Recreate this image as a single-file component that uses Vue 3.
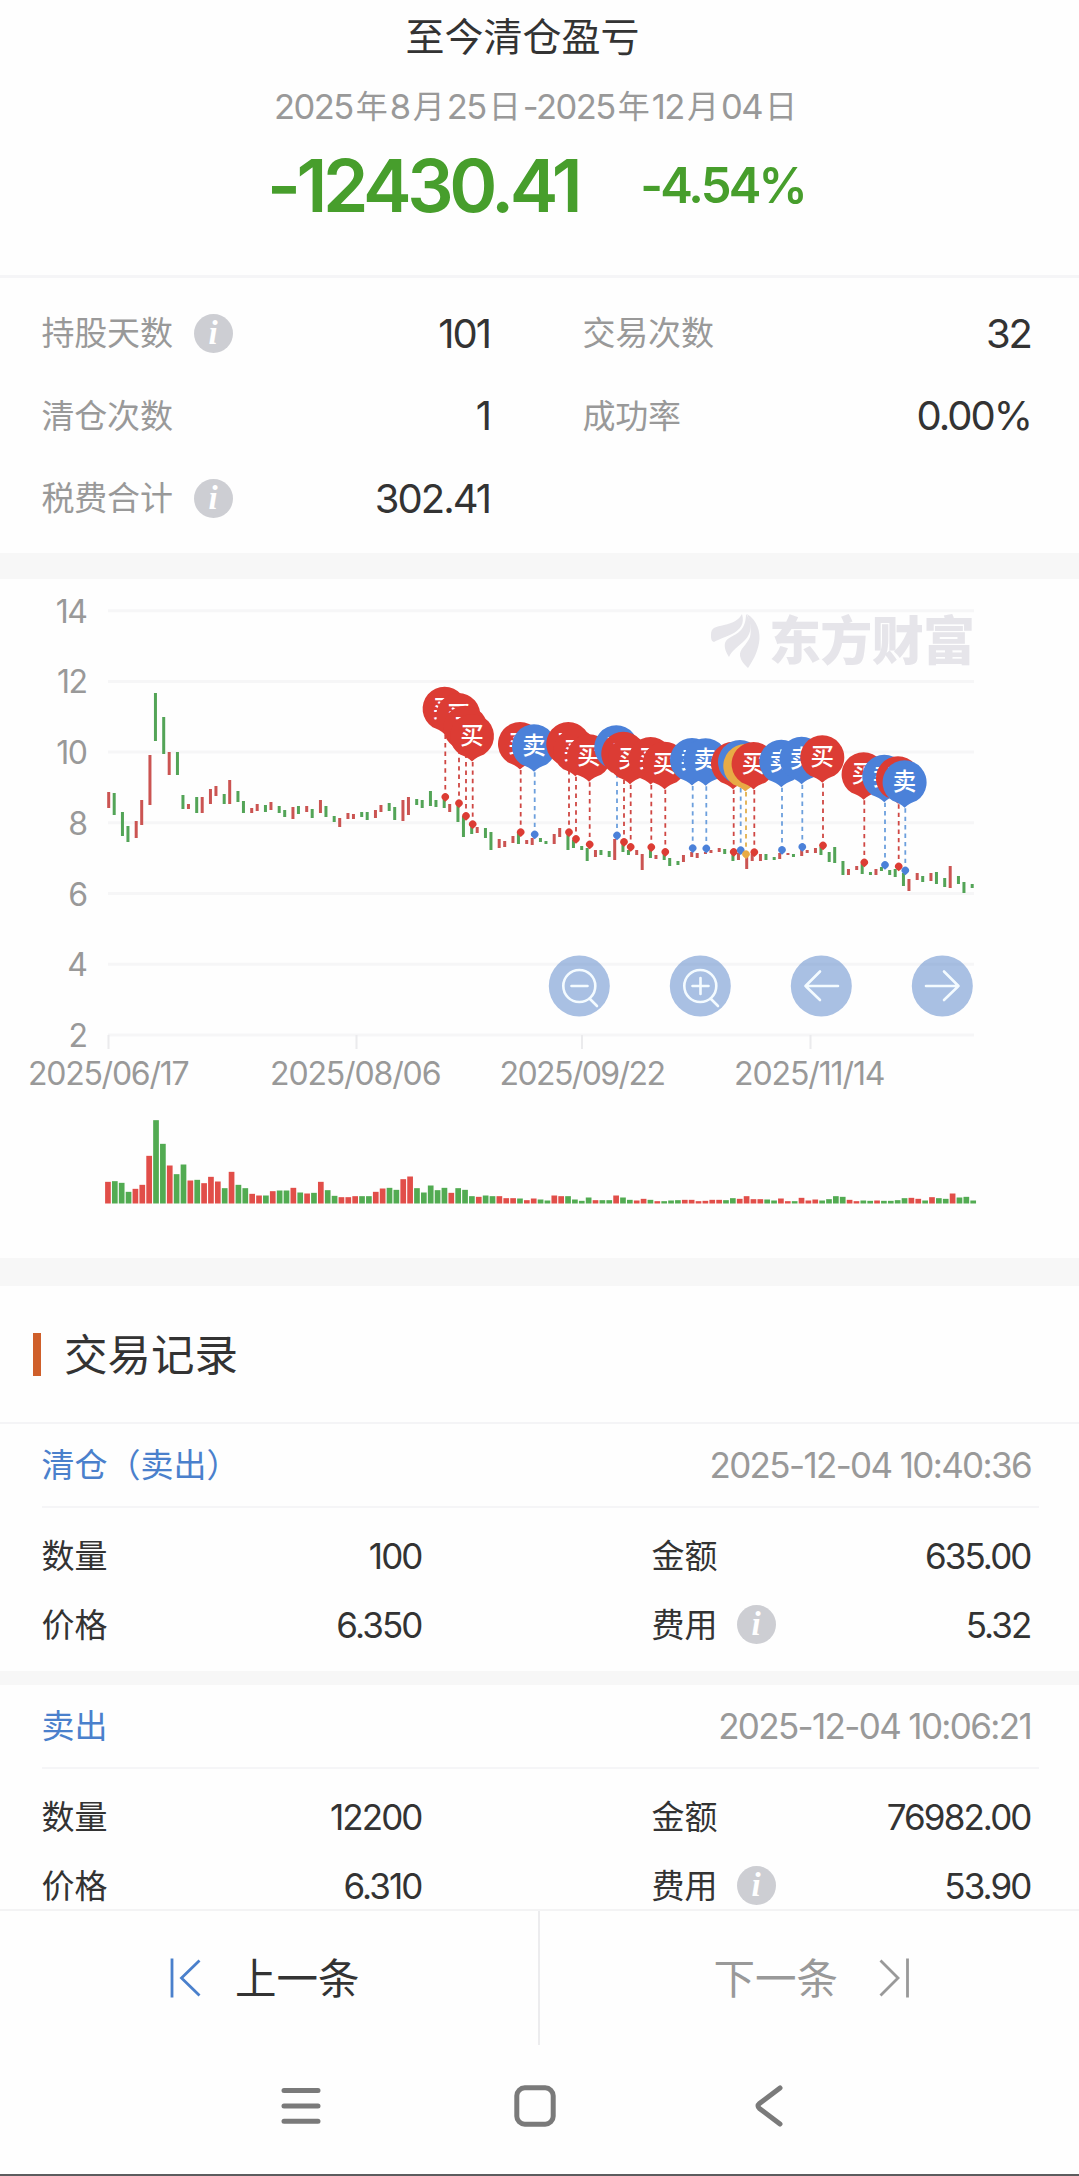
<template>
  <div class="page">
    <!-- 顶部盈亏 -->
    <header class="summary">
      <h1 class="summary-title">至今清仓盈亏</h1>
      <p class="summary-date">
        <span v-for="(part, i) in dateParts" :key="i" :class="{ unit: isUnit(part) }">{{ part }}</span>
      </p>
      <div class="summary-profit">
        <span class="profit">-12430.41</span>
        <span class="percent">-4.54%</span>
      </div>
    </header>

    <!-- 统计 -->
    <section class="stats">
      <div v-for="item in stats" :key="item.label" class="stat">
        <span class="label">{{ item.label }}</span>
        <svg v-if="item.info" class="info" viewBox="0 0 39 39">
          <circle cx="19.5" cy="19.5" r="19.5" />
          <text x="19" y="30">i</text>
        </svg>
        <span class="stat-value">{{ item.value }}</span>
      </div>
    </section>

    <!-- K线图 -->
    <section class="chart">
      <svg class="chart-svg" viewBox="0 579 1079 679">
        <g class="grid">
          <line v-for="g in grid" :key="g.label" x1="108" x2="974" :y1="g.y" :y2="g.y" />
          <line v-for="t in ticks" :key="t.label" class="tick" :x1="t.x" :x2="t.x" y1="1035" y2="1049" />
        </g>
        <g class="axis">
          <text v-for="g in grid" :key="g.label" x="86.5" :y="g.y + 12" text-anchor="end">{{ g.label }}</text>
          <text
            v-for="t in ticks"
            :key="t.label"
            :x="t.left"
            y="1085"
            :textLength="t.width"
          >{{ t.label }}</text>
        </g>

        <!-- 水印 -->
        <g class="watermark">
          <path d="M711 635C711 627 716 627 724 625C733 623 739 620 742 614C745 624 740 630 732 634C723 638 717 640 714 642C711 641 711 638 711 635Z" />
          <path d="M725 643C727 637 735 636 740 631C744 627 746 621 746 614C753 622 752 633 745 640C739 646 732 650 729 657C726 652 724 648 725 643Z" />
          <path d="M740 656C739 649 747 645 750 637C752 629 750 621 747 614C757 620 761 632 759 643C757 654 752 662 748 668C744 664 741 661 740 656Z" />
          <text x="769" y="660" textLength="206">东方财富</text>
        </g>

        <rect
          v-for="c in candles"
          :key="c.i"
          :class="c.color"
          :x="c.x - 1.5"
          :y="c.top"
          width="3"
          :height="c.height"
        />

        <g v-for="(m, i) in markers" :key="'line' + i" :class="m.type">
          <line class="dash" :x1="m.x" :x2="m.x" :y1="m.y - 62" :y2="m.y - 4" />
          <path class="dot" :d="`M${m.x} ${m.y + 5}l-2.6-2.2a3.7 3.7 0 1 1 5.2 0Z`" />
        </g>
        <g
          v-for="(m, i) in markers"
          :key="'pin' + i"
          :class="m.type"
          :transform="`translate(${m.x - 0.7} ${m.y - 87})`"
        >
          <path class="pin" d="M0 24.5C-3 21-8 19-12 17.5A22 22 0 1 1 12 17.5C8 19 3 21 0 24.5Z" />
          <text class="pin-text" x="0" y="7">{{ pinText[m.type] }}</text>
        </g>

        <g class="tools">
          <circle v-for="x in [579.3, 700.3, 821.3, 942.3]" :key="x" :cx="x" cy="986" r="30.5" />
          <path d="M595.3 986a16 16 0 1 1-32 0a16 16 0 1 1 32 0M571.5 986h16M589.5 998.5l7.5 7.5" />
          <path d="M716.3 986a16 16 0 1 1-32 0a16 16 0 1 1 32 0M692.5 986h16M700.5 978v16M710.5 998.5l7.5 7.5" />
          <path d="M838 986h-32.5M820 971.5L805.5 986l14.5 14" />
          <path d="M926 986h32.5M944 971.5L958.5 986l-14.5 14" />
        </g>

        <!-- 成交量 -->
        <rect
          v-for="v in volumes"
          :key="'v' + v.i"
          :class="['vol', v.color]"
          :x="v.x - 2.9"
          :y="1203.5 - v.height"
          width="5.7"
          :height="v.height"
        />
      </svg>
    </section>

    <!-- 交易记录 -->
    <section class="records">
      <h2 class="records-title"><span class="label">交易记录</span></h2>
      <article v-for="r in records" :key="r.time" class="record">
        <div class="record-head">
          <span class="record-type label">{{ r.type }}</span>
          <span class="record-time">{{ r.time }}</span>
        </div>
        <div class="record-body">
          <span class="label">数量</span>
          <span class="num">{{ r.count }}</span>
          <span class="right"><span class="label">金额</span></span>
          <span class="num">{{ r.amount }}</span>
          <span class="label">价格</span>
          <span class="num">{{ r.price }}</span>
          <span class="right">
            <span class="label">费用</span>
            <svg class="info" viewBox="0 0 39 39">
              <circle cx="19.5" cy="19.5" r="19.5" />
              <text x="19" y="30">i</text>
            </svg>
          </span>
          <span class="num">{{ r.fee }}</span>
        </div>
      </article>
    </section>

    <footer class="pager">
      <button class="pager-btn prev">
        <svg width="31" height="40" viewBox="0 0 31 40"><path d="M2 0.5v39M29.5 2.5L11.5 20l18 17.5" /></svg>
        <span class="label">上一条</span>
      </button>
      <button class="pager-btn next">
        <span class="label">下一条</span>
        <svg width="31" height="40" viewBox="0 0 31 40"><path d="M28.5 0.5v39M1.5 2.5L19 20L1.5 37.5" /></svg>
      </button>
    </footer>

    <nav class="sysbar">
      <svg width="42" height="42" viewBox="0 0 42 42"><path d="M4 5.5h34M4 21h34M4 36.3h34" /></svg>
      <svg width="42" height="42" viewBox="0 0 42 42"><rect x="2.8" y="2.8" width="36.4" height="36.4" rx="8" /></svg>
      <svg width="42" height="42" viewBox="0 0 42 42"><path d="M32 3L11.5 18.5q-3 2.5 0 5L32 39" /></svg>
    </nav>
  </div>
</template>

<script setup>
import { ref, computed } from 'vue'

const dateParts = '2025年8月25日-2025年12月04日'.split(/([年月日])/).filter(Boolean)
const isUnit = (part) => '年月日'.includes(part)

const stats = ref([
  { label: '持股天数', value: '101', info: true },
  { label: '交易次数', value: '32' },
  { label: '清仓次数', value: '1' },
  { label: '成功率', value: '0.00%' },
  { label: '税费合计', value: '302.41', info: true }
])

const records = ref([
  { type: '清仓（卖出）', time: '2025-12-04 10:40:36', count: '100', amount: '635.00', price: '6.350', fee: '5.32' },
  { type: '卖出', time: '2025-12-04 10:06:21', count: '12200', amount: '76982.00', price: '6.310', fee: '53.90' }
])

const grid = [14, 12, 10, 8, 6, 4, 2].map((label, i) => ({ label, y: 610.7 + i * 70.7 }))

const ticks = [
  { label: '2025/06/17', x: 108.5, left: 28, width: 160 },
  { label: '2025/08/06', x: 356.5, left: 270, width: 170 },
  { label: '2025/09/22', x: 582, left: 499.5, width: 165 },
  { label: '2025/11/14', x: 810.5, left: 734, width: 150 }
]

// r = 涨, g = 跌
const colors =
  'rgggrrrggrggrgrrrgrggrrgrggrgrgrggrrrggrrggrrggggg' +
  'rgggrggrrrgrrggrrggggrggrggrrgrgggrrrrrrggrrrrggrrgrrrggggrrggrggggrrgrggrggg'

// [最高, 最低]
const ranges = [
  [792, 808], [793, 815], [812, 836], [826, 842], [821, 838], [800, 825], [755, 805], [693, 741], [717, 754], [752, 775],
  [752, 775], [795, 809], [804, 809], [797, 813], [797, 813], [789, 804], [786, 796], [794, 804], [780, 804], [791, 802],
  [801, 813], [808, 813], [804, 811], [805, 812], [802, 810], [806, 813], [810, 817], [807, 819], [806, 814], [806, 812],
  [809, 818], [800, 813], [806, 817], [816, 822], [818, 827], [813, 819], [814, 819], [812, 817], [812, 820], [810, 818],
  [805, 812], [803, 811], [807, 820], [800, 821], [797, 815], [799, 805], [800, 808], [791, 806], [800, 807], [797, 808],
  [804, 812], [803, 822], [816, 837], [824, 834], [827, 833], [828, 838], [832, 850], [839, 848], [841, 847], [836, 843],
  [832, 844], [840, 844], [838, 845], [838, 842], [841, 844], [834, 844], [828, 837], [832, 850], [840, 848], [846, 850],
  [848, 861], [850, 857], [850, 855], [851, 857], [839, 860], [842, 852], [850, 855], [850, 855], [854, 870], [847, 858],
  [855, 859], [852, 860], [858, 866], [861, 865], [855, 862], [852, 857], [853, 858], [852, 854], [850, 853], [848, 852],
  [849, 854], [853, 861], [853, 860], [857, 869], [854, 861], [854, 861], [854, 860], [857, 860], [853, 859], [853, 855],
  [854, 857], [850, 856], [850, 853], [848, 853], [847, 855], [852, 862], [847, 863], [861, 875], [869, 875], [866, 870],
  [864, 874], [872, 875], [869, 875], [867, 871], [870, 875], [869, 877], [873, 886], [879, 891], [873, 880], [876, 882],
  [873, 881], [872, 884], [878, 887], [866, 888], [876, 884], [882, 893], [884, 888]
]

const volumeData = [
  65, 67, 62, 35, 44, 56, 143, 250, 179, 114, 88, 117, 69, 71, 61, 80, 66, 46, 95, 56, 46, 29, 24, 24, 37, 39, 39, 47, 33, 30,
  32, 65, 40, 23, 19, 19, 22, 22, 22, 35, 45, 47, 41, 73, 81, 46, 33, 54, 40, 47, 32, 46, 41, 22, 20, 24, 22, 22, 16, 16,
  15, 10, 15, 12, 9, 24, 22, 22, 12, 8, 18, 10, 10, 10, 24, 18, 11, 9, 14, 11, 7, 7, 9, 10, 11, 11, 7, 8, 11, 11,
  10, 16, 14, 22, 13, 13, 12, 9, 15, 7, 7, 17, 9, 12, 9, 13, 22, 20, 11, 7, 9, 8, 9, 8, 8, 10, 16, 17, 14, 9,
  19, 16, 14, 30, 18, 20, 9
]

const candles = computed(() =>
  ranges.map(([top, bottom], i) => ({
    i,
    x: 108.7 + 2.75 * Math.floor(i * 2.495 + 0.055),
    top,
    height: bottom - top,
    color: colors[i] === 'r' ? 'up' : 'down'
  }))
)

const volumes = computed(() =>
  volumeData.map((v, i) => ({
    i,
    x: 108 + i * 6.867,
    height: v / 3,
    color: colors[i] === 'r' ? 'up' : 'down'
  }))
)

const pinText = { buy: '买', sell: '卖', both: 'T' }

const markers = [
  [445.3, 796.7, 'buy'], [459, 803, 'buy'], [466, 815.7, 'buy'], [472.7, 824, 'buy'],
  [520.7, 832, 'buy'], [534.7, 834.3, 'sell'], [569, 832, 'buy'], [576, 838.7, 'buy'],
  [589.7, 844.3, 'buy'], [617, 835.3, 'sell'], [624, 841.7, 'buy'], [630.7, 846.7, 'buy'],
  [651.3, 847, 'buy'], [665.3, 851.7, 'buy'], [692.7, 848, 'sell'], [706.3, 848.3, 'sell'],
  [733.7, 851.7, 'buy'], [740.7, 850, 'sell'], [746, 854, 'both'], [754.3, 852, 'buy'],
  [782, 849.7, 'sell'], [802.3, 846.7, 'sell'], [823, 845.3, 'buy'], [864.3, 862.3, 'buy'],
  [885, 864.7, 'sell'], [898.7, 866.3, 'buy'], [905.3, 870.3, 'sell']
].map(([x, y, type]) => ({ x, y, type }))
</script>

<style>
body {
  background: #fff;
}
</style>

<style scoped>
.page {
  width: 1079px;
  height: 2176px;
  box-sizing: border-box;
  display: flex;
  flex-direction: column;
  overflow: hidden;
  background: #fefefe;
  border-bottom: 2px solid #5c5c5e;
  color: #333;
  font-family: 'Inter', 'Noto Sans CJK SC', sans-serif;
}

h1,
h2,
p {
  margin: 0;
  font-weight: 400;
}

/* 中文字形偏低，往上收一点 */
.label {
  padding-bottom: 4px;
}

/* 顶部 */
.summary {
  flex: none;
  height: 278px;
  box-sizing: border-box;
  padding-top: 7px;
  border-bottom: 3px solid #f5f5f7;
}

.summary-title {
  padding-right: 34px;
  font-size: 39px;
  line-height: 60px;
  text-align: center;
}

.summary-date {
  display: flex;
  justify-content: center;
  padding-right: 6px;
  margin-top: 15px;
  color: #999;
  font-size: 34.5px;
  line-height: 50px;
  letter-spacing: -1.5px;
}

.summary-date .unit {
  padding: 0 2px 0 3px;
  font-size: 32px;
  letter-spacing: 0;
}

.summary-profit {
  display: flex;
  justify-content: center;
  align-items: center;
  gap: 62px;
  height: 106px;
  padding-right: 7px;
  color: #479e2c;
  font-weight: 600;
}

.profit {
  font-size: 73px;
  letter-spacing: -4.4px;
}

.percent {
  font-size: 49px;
  letter-spacing: -2.8px;
}

/* 统计 */
.stats {
  flex: none;
  display: grid;
  grid-template-columns: 448.5px 448.5px;
  column-gap: 92.5px;
  grid-auto-rows: 82.5px;
  height: 275px;
  box-sizing: border-box;
  padding: 14px 0 0 41.5px;
}

.stat {
  display: flex;
  align-items: center;
  font-size: 33px;
}

.stat .label {
  color: #999;
  letter-spacing: -0.2px;
}

.stat-value {
  margin-left: auto;
  font-size: 40px;
  letter-spacing: -2px;
}

.info {
  width: 39px;
  height: 39px;
  margin-left: 21.5px;
}

.info circle {
  fill: #cdced3;
}

.info text {
  fill: #fff;
  font: italic bold 33px 'Liberation Serif', serif;
  text-anchor: middle;
}

/* 图表 */
.chart {
  flex: none;
  height: 733px;
  box-sizing: border-box;
  border-top: 26px solid #f7f7f7;
  border-bottom: 28px solid #f7f7f7;
}

.chart-svg {
  display: block;
  width: 1079px;
  height: 679px;
}

.grid line {
  stroke: #f6f6f7;
  stroke-width: 3;
}

.grid .tick {
  stroke: #ebebed;
  stroke-width: 2;
}

.axis text {
  fill: #999;
  font-size: 32px;
  letter-spacing: -1.5px;
}

.watermark {
  fill: #e6e5ea;
}

.watermark text {
  font-size: 52px;
  font-weight: 900;
}

.up {
  fill: #cb5452;
}

.down {
  fill: #53a457;
}

.vol.up {
  fill: #e14e49;
}

.vol.down {
  fill: #52ab52;
}

.buy {
  fill: #dc3c34;
  stroke: #cf4743;
}

.sell {
  fill: #4b81d9;
  stroke: #6c9fdd;
}

.both {
  fill: #e8ab45;
  stroke: #e3b04c;
}

.dash {
  stroke-width: 1.8;
  stroke-dasharray: 4.4 4;
}

.dot,
.pin,
.pin-text {
  stroke: none;
}

.pin-text {
  fill: #fff;
  font-size: 23.5px;
  font-weight: 500;
  text-anchor: middle;
}

.tools circle {
  fill: #5b86c9;
  fill-opacity: 0.52;
}

.tools path {
  fill: none;
  stroke: #f4fbff;
  stroke-width: 2.6;
  stroke-linecap: round;
  stroke-linejoin: round;
}

/* 交易记录 */
.records {
  flex: none;
  height: 623px;
  overflow: hidden;
}

.records-title {
  display: flex;
  align-items: center;
  height: 138px;
  box-sizing: border-box;
  padding-left: 33px;
  border-bottom: 2px solid #f4f4f6;
  font-size: 43.5px;
}

.records-title::before {
  content: '';
  width: 8px;
  height: 43px;
  margin-right: 23px;
  background: #cf5f2a;
}

.record {
  height: 261px;
  box-sizing: border-box;
  border-bottom: 14px solid #f7f7f7;
}

.record-head {
  display: flex;
  justify-content: space-between;
  align-items: center;
  height: 84px;
  box-sizing: border-box;
  margin: 0 40px 0 41.5px;
  padding-right: 8px;
  border-bottom: 2.5px solid #f5f5f7;
  font-size: 33px;
}

.record-type {
  color: #4a80cc;
}

.record-time {
  color: #999;
  font-size: 35px;
  letter-spacing: -1.65px;
}

.record-body {
  display: grid;
  grid-template-columns: 140px 240px 370px 239px;
  grid-auto-rows: 69px;
  align-items: center;
  padding: 13px 0 0 41.5px;
  font-size: 33px;
}

.right {
  display: flex;
  align-items: center;
  padding-left: 230px;
}

.right .info {
  margin-left: 19.5px;
}

.num {
  font-size: 35px;
  letter-spacing: -1.9px;
  text-align: right;
}

/* 底部 */
.pager {
  flex: none;
  display: flex;
  height: 136px;
  box-sizing: border-box;
  border-top: 2px solid #f3f3f4;
}

.pager-btn {
  display: flex;
  align-items: center;
  width: 50%;
  padding: 0;
  border: none;
  background: none;
  color: #333;
  font-family: inherit;
  font-size: 41.5px;
}

.pager-btn svg {
  fill: none;
  stroke: #4a80cc;
  stroke-width: 2.8;
}

.prev {
  gap: 34px;
  padding-left: 170px;
  border-right: 2px solid #ececee;
}

.next {
  gap: 41px;
  padding-left: 174px;
  color: #999;
}

.next svg {
  stroke: #999;
}

.sysbar {
  display: flex;
  gap: 192px;
  padding: 40px 0 0 280px;
}

.sysbar svg {
  fill: none;
  stroke: #7a7a7a;
  stroke-width: 5;
  stroke-linecap: round;
}
</style>
